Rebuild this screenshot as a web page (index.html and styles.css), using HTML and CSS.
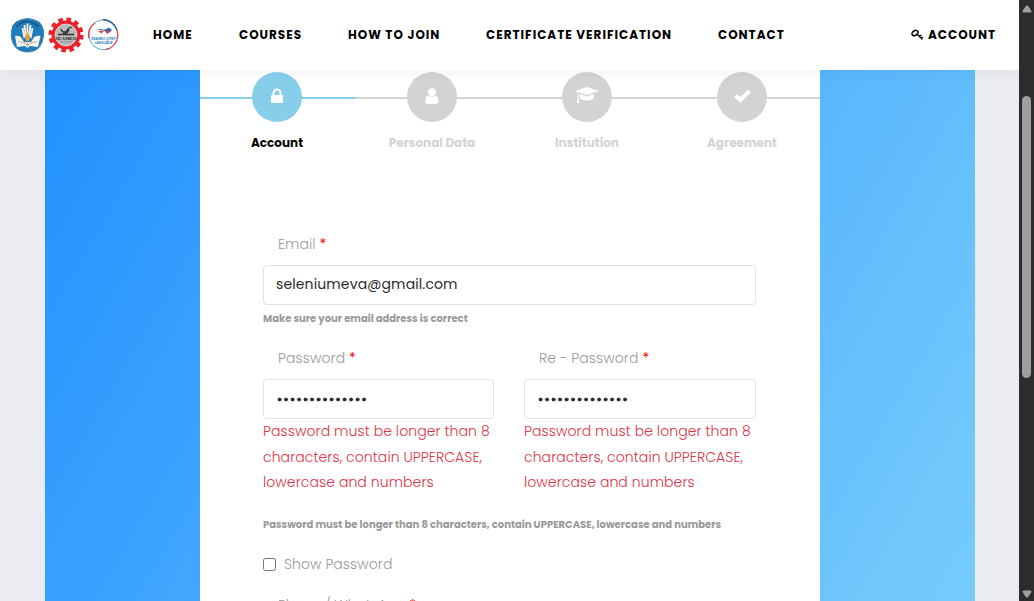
FILE: index.html
```html
<!DOCTYPE html>
<html lang="en">
<head>
<meta charset="utf-8">
<title>Account registration</title>
<link rel="stylesheet" href="styles.css">
</head>
<body>
<div class="page">
  <header class="header">
    <div class="logos">
      <svg width="35" height="36" viewBox="0 0 35 36">
        <path d="M17.500 1.500Q24 2 29 5Q33 9 33.500 14Q34 20 32 25Q30 31 26 33Q21 35 17.500 35Q13 35 9 33Q4 30 2.500 25Q.5 20 1.500 14Q2 8 6 5Q11 2 17.500 1.500Z" fill="#217cbd" stroke="#3583b4"/>
        <path d="M6.500 9.500Q17 -.5 28.500 9.500" fill="none" stroke="#17486b" stroke-width="2" stroke-dasharray="1.500 .8"/>
        <path d="M5 19Q10 18 12 22L14 25H21L23 22Q25 18 30.500 19L28 30L20 29L17.500 31L15 29L7 30Z" fill="#f7f4ed"/>
        <path d="M12.500 11L14.500 21M14.500 8L15.800 19M17.500 6.500V19M20.500 8L19.200 19M22.500 11L20.500 21" stroke="#eee9dc" stroke-width="1.900"/>
        <path d="M17.500 15Q22 22 17.500 25Q13 22 17.500 15Z" fill="#e3a136"/>
        <path d="M8 25Q13 24 17.500 28Q22 24 27 25M17.500 25V30" fill="none" stroke="#a99a80" stroke-width=".8"/>
      </svg>
      <svg width="36" height="36" viewBox="0 0 36 36">
        <circle cx="18" cy="18" r="15.600" fill="none" stroke="#ec2027" stroke-width="4" stroke-dasharray="4.500 3.668"/>
        <circle cx="18" cy="18" r="12.500" fill="#b9babc" stroke="#ec2027" stroke-width="4"/>
        <circle cx="18" cy="18" r="11" fill="#b9babc" stroke="#e6dddd" stroke-width=".8"/>
        <path d="M13 12Q14 16 18 14.500L21 11L24 10M21 12Q20 17 15 16M10 17.500H26" fill="none" stroke="#333" stroke-width="1.300"/>
        <text class="seal-text" x="18" y="22.500" text-anchor="middle">SEAMEO</text>
        <path d="M12 25H24" stroke="#8d8f91"/>
      </svg>
      <svg width="33" height="34" viewBox="0 0 33 34">
        <path d="M21 2.300A15 15 0 1 0 24 30" fill="none" stroke="#5c9fd0"/>
        <path d="M1.800 20A15 15 0 0 1 8 5" fill="none" stroke="#e93c43" stroke-width="1.300"/>
        <path d="M16 1.800A15 15 0 0 1 30 12" fill="none" stroke="#205c9e" stroke-width="1.500"/>
        <path d="M30 12A15 15 0 0 1 19 31.500" fill="none" stroke="#e93c43" stroke-width="1.300"/>
        <path d="M7 11.500L14 11L17 12L22 9.500L25 12L22 15L17.500 13Q13 11 7 11.500Z" fill="#286faf"/>
        <path d="M11 12.500L17 13L14 15.500ZM18 13L24 12.500L20 16Z" fill="#e33c46"/>
        <text class="language-text" x="16.500" y="22" text-anchor="middle">SEAMEO QITEP</text>
        <text class="language-text" x="16.500" y="26" text-anchor="middle">LANGUAGE</text>
      </svg>
    </div>
    <nav class="nav">
      <a class="home">HOME</a><a class="courses">COURSES</a><a class="join">HOW TO JOIN</a><a class="verify">CERTIFICATE VERIFICATION</a><a class="contact">CONTACT</a>
      <a class="login"><svg width="13" height="12" viewBox="0 0 13 12" fill="none" stroke="#000"><ellipse cx="4" cy="4" rx="3.200" ry="2.300" transform="rotate(-30 4 4)" stroke-width="1.500"/><path d="M6 5L11.500 10.500M8.500 7.500L10.500 6M10.300 9.500L12 8" stroke-width="1.400"/></svg><span>ACCOUNT</span></a>
    </nav>
  </header>
  <main class="hero">
    <section class="card">
      <ol class="steps">
        <li class="step active"><div class="rail"><span class="disc"><svg width="14" height="16" viewBox="0 0 14 16"><path d="M3.500 8V5a3.500 3.500 0 0 1 7 0v3" fill="none" stroke="#fff" stroke-width="2"/><rect x="1" y="7" width="12" height="8" rx="1" fill="#fff"/></svg></span></div><span class="step-name">Account</span></li>
        <li class="step"><div class="rail"><span class="disc"><svg width="14" height="16" viewBox="0 0 14 16" fill="#fff"><circle cx="7" cy="4.200" r="4"/><path d="M3.300 7.500Q7 10 10.700 7.500Q14 9 13.500 14Q13 16 11 16H3Q0 16 .4 13Q.5 8 3.300 7.500Z"/></svg></span></div><span class="step-name">Personal Data</span></li>
        <li class="step"><div class="rail"><span class="disc"><svg width="24" height="17" viewBox="0 0 24 17" fill="#fff"><path d="M12 0L24 4L12 8L3.500 5.200V10L4.500 16H1.800L2.700 10V5L0 4ZM5 7L12 9.500L19 7V11.500Q15 14 12 13.500Q8 14 5 11.500Z"/></svg></span></div><span class="step-name">Institution</span></li>
        <li class="step"><div class="rail"><span class="disc"><svg width="17" height="14" viewBox="0 0 17 14"><path d="M1.700 6.500L6.500 11L15.500 2" fill="none" stroke="#fff" stroke-width="4"/></svg></span></div><span class="step-name">Agreement</span></li>
      </ol>
      <form class="form">
        <label class="label">Email <b>*</b></label>
        <div class="field email">seleniumeva@gmail.com</div>
        <small class="hint hint-email">Make sure your email address is correct</small>
        <div class="passwords">
          <div class="password">
            <label class="label">Password <b>*</b></label>
            <div class="field"><span class="dots"></span></div>
            <p class="error">Password must be longer than 8<br>characters, contain UPPERCASE,<br>lowercase and numbers</p>
          </div>
          <div class="password">
            <label class="label">Re - Password <b>*</b></label>
            <div class="field"><span class="dots"></span></div>
            <p class="error">Password must be longer than 8<br>characters, contain UPPERCASE,<br>lowercase and numbers</p>
          </div>
        </div>
        <small class="hint hint-pass">Password must be longer than 8 characters, contain UPPERCASE, lowercase and numbers</small>
        <label class="show"><span class="box"></span><span>Show Password</span></label>
        <label class="label phone-label">Phone / WhatsApp <b>*</b></label>
      </form>
    </section>
  </main>
</div>
<aside class="scrollbar">
  <svg width="10" height="8" viewBox="0 0 10 8"><path d="M4 .8Q5 0 6 .8L9.500 6Q9.500 7.500 8.500 7.500H1.500Q.5 7.500 .5 6Z" fill="#9f9f9f"/></svg>
  <span class="thumb"></span>
  <svg class="down" width="10" height="8" viewBox="0 0 10 8"><path d="M4 7.200Q5 8 6 7.200L9.500 2Q9.500 .5 8.500 .5H1.500Q.5 .5 .5 2Z" fill="#9f9f9f"/></svg>
</aside>
</body>
</html>
```
FILE: styles.css
```css
* { box-sizing: border-box; }
body {
  margin: 0;
  height: 601px;
  display: flex;
  overflow: hidden;
  background: #ebecf1;
  font-family: Poppins, Inter, sans-serif;
}
.page { width: 1019px; height: 601px; overflow: hidden; }
.header {
  position: relative;
  z-index: 1;
  height: 70px;
  display: flex;
  background: #fff;
  box-shadow: 0 0 15px rgba(0, 0, 0, .07);
}
.logos { display: flex; align-items: center; gap: 3px; padding-left: 10px; width: 153px; }
.seal-text { font: bold 5px "Liberation Serif", serif; fill: #222; }
.language-text { font: bold 3.2px "Liberation Sans", sans-serif; fill: #2479b8; }
.nav { display: flex; align-items: center; font-size: 12px; font-weight: 700; letter-spacing: 1px; white-space: nowrap; color: #000; }
.home { width: 86px; }
.courses { width: 109px; }
.join { width: 138px; }
.verify { width: 232px; }
.contact { width: 193px; }
.login { display: flex; align-items: center; gap: 4px; }
.hero { height: 531px; padding: 0 155px; margin: 0 44px 0 45px; background: linear-gradient(120deg, #2291ff, #77ccfb); }
.card { height: 531px; overflow: hidden; background: #fff; }
.steps { list-style: none; margin: 0; padding: 2px 0 0; display: flex; }
.step { width: 155px; text-align: center; color: #d3d3d3; }
.active { color: #000; }
.rail { height: 50px; display: flex; padding-left: 52px; background: linear-gradient(#d3d3d3, #d3d3d3) 0 25px / 100% 2px no-repeat; }
.disc { width: 50px; height: 50px; border-radius: 50%; display: flex; align-items: center; justify-content: center; padding-bottom: 3px; background: #d3d3d3; }
.active .rail { background-image: linear-gradient(#87ceeb, #87ceeb); }
.active .disc { background: #87ceeb; }
.step-name { display: block; margin: 11px 1px 0 0; font-size: 12px; line-height: 20px; font-weight: 700; }
.form { margin: 80px 64px 0 63px; color: #999; font-size: 14px; }
.label { display: block; padding-left: 15px; height: 32px; line-height: 23px; font-weight: 300; letter-spacing: .08px; white-space: nowrap; }
.label b { color: red; font-weight: 400; }
.field { height: 40px; border: 1px solid #e2e2e4; border-radius: 4px; padding: 0 12px; display: flex; align-items: center; background: #fff; color: #292b2c; }
.email { padding-bottom: 2px; font-weight: 400; letter-spacing: .12px; }
.hint { display: block; font-size: 10px; line-height: 16px; font-weight: 700; white-space: nowrap; }
.hint-email { margin-top: 6px; }
.passwords { display: grid; grid-template-columns: 231px 232px; gap: 30px; margin-top: 20px; }
.dots { width: 91px; height: 5px; margin-left: 1px; background: radial-gradient(circle at 2.500px 2.500px, #292b2c 1.700px, transparent 2.200px) 0 0 / 6.500px 5px repeat-x; }
.error { margin: 0; line-height: 25.500px; color: #dc3545; font-weight: 300; letter-spacing: .08px; white-space: nowrap; }
.hint-pass { margin-top: 21px; }
.show { display: flex; align-items: center; gap: 8px; height: 24px; margin-top: 20px; font-weight: 300; letter-spacing: .06px; }
.box { width: 13px; height: 13px; border: 1px solid #767676; border-radius: 2.500px; }
.phone-label { margin-top: 17px; letter-spacing: -.1px; }
.scrollbar { width: 15px; height: 601px; background: #2c2c2c; display: flex; flex-direction: column; align-items: center; padding-top: 5px; }
.thumb { width: 9px; height: 282px; margin-top: 83px; border-radius: 5px; background: #9f9f9f; }
.down { margin-top: 212px; }
```
